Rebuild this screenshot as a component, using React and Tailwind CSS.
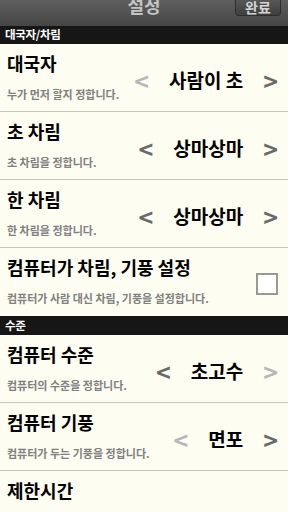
import React, { useState } from "react";

const FONT = { fontFamily: '"Noto Sans CJK KR", "Noto Sans", sans-serif' };

const SectionHeader = ({ label, tall }) => (
  <div className={`bg-[#161616] text-white font-bold text-[11.5px] px-[5px] flex items-center tracking-[-0.3px] ${tall ? "h-[19px]" : "h-[18px]"}`}>
    {label}
  </div>
);

const Arrow = ({ dir, enabled }) => (
  <span className={`text-[25px] font-bold leading-none ${enabled ? "text-[#6a6a6a]" : "text-[#b8b8b8]"}`}>
    {dir === "left" ? "<" : ">"}
  </span>
);

const SettingRow = ({ title, desc, value, leftOn = true, rightOn = true, checkbox, plain, last }) => {
  const [checked, setChecked] = useState(false);
  return (
    <div className={`h-[68px] flex items-stretch pl-[7px] pr-[10px] ${last ? "" : "border-b border-[#c4c4bb]"}`}>
      <div className="flex-1 flex flex-col pt-[8px]">
        <div className="text-[18px] font-bold text-black leading-[22px]">{title}</div>
        <div className="text-[11px] font-bold text-[#808080] leading-[14px] mt-[13px]">{desc}</div>
      </div>
      {plain ? null : checkbox ? (
        <div className="flex items-center pt-[4px]">
          <button
            onClick={() => setChecked(!checked)}
            className="w-[22px] h-[22px] border-2 border-[#9a9a94] bg-white"
          >
            {checked && <span className="text-[14px] leading-none">✓</span>}
          </button>
        </div>
      ) : (
        <div className="flex items-center gap-[20px] pt-[6px]">
          <Arrow dir="left" enabled={leftOn} />
          <span className="text-[19px] font-bold text-black">{value}</span>
          <Arrow dir="right" enabled={rightOn} />
        </div>
      )}
    </div>
  );
};

export default function App() {
  return (
    <div style={FONT} className="w-[288px] h-[512px] overflow-hidden bg-[#fdfdf1]">
      <div className="h-[26px] bg-gradient-to-b from-[#5e5e5e] to-[#454545] relative flex items-start justify-center">
        <span className="text-[18px] font-bold text-[#c4c4c4] leading-none -mt-[4px]">설정</span>
        <button className="absolute right-[7px] top-[-4px] h-[20px] w-[46px] rounded-[3px] bg-gradient-to-b from-[#5c5c5c] to-[#3f3f3f] border border-[#2e2e2e] text-[#d4d4d4] text-[14px] font-bold leading-none pt-[1px]">
          완료
        </button>
      </div>
      <SectionHeader label="대국자/차림" />
      <SettingRow title="대국자" desc="누가 먼저 할지 정합니다." value="사람이 초" leftOn={false} />
      <SettingRow title="초 차림" desc="초 차림을 정합니다." value="상마상마" />
      <SettingRow title="한 차림" desc="한 차림을 정합니다." value="상마상마" />
      <SettingRow title="컴퓨터가 차림, 기풍 설정" desc="컴퓨터가 사람 대신 차림, 기풍을 설정합니다." checkbox last />
      <SectionHeader label="수준" tall />
      <SettingRow title="컴퓨터 수준" desc="컴퓨터의 수준을 정합니다." value="초고수" rightOn={false} />
      <SettingRow title="컴퓨터 기풍" desc="컴퓨터가 두는 기풍을 정합니다." value="면포" leftOn={false} />
      <SettingRow title="제한시간" desc="" plain />
    </div>
  );
}
